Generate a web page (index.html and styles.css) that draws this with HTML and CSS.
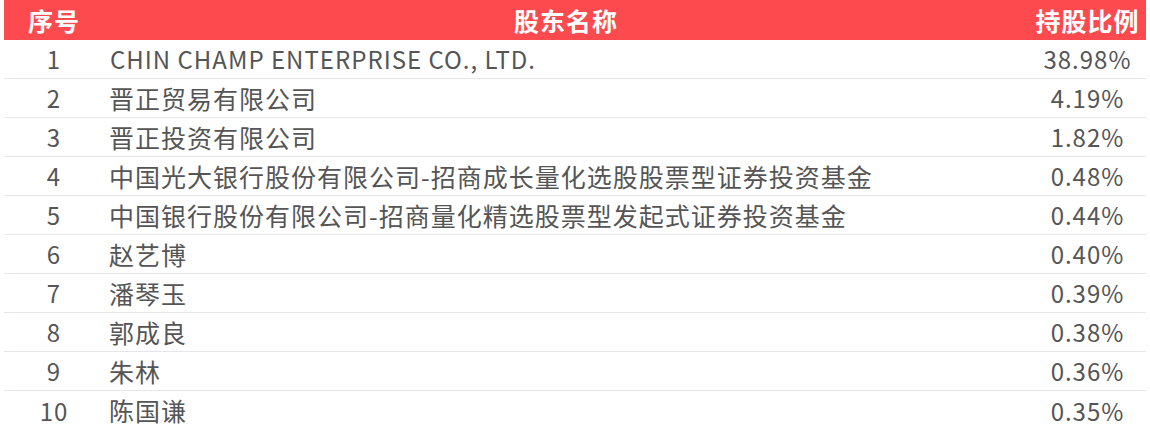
FILE: index.html
```html
<!DOCTYPE html>
<html lang="zh-CN">
<head>
<meta charset="utf-8">
<link rel="stylesheet" href="styles.css">
</head>
<body>
<div class="table">
  <div class="row head">
    <div class="c1">序号</div>
    <div class="c2">股东名称</div>
    <div class="c3">持股比例</div>
  </div>
  <div class="row"><div class="c1">1</div><div class="c2">CHIN CHAMP ENTERPRISE CO., LTD.</div><div class="c3">38.98%</div></div>
  <div class="row"><div class="c1">2</div><div class="c2 cn">晋正贸易有限公司</div><div class="c3">4.19%</div></div>
  <div class="row"><div class="c1">3</div><div class="c2 cn">晋正投资有限公司</div><div class="c3">1.82%</div></div>
  <div class="row"><div class="c1">4</div><div class="c2 cn">中国光大银行股份有限公司-招商成长量化选股股票型证券投资基金</div><div class="c3">0.48%</div></div>
  <div class="row"><div class="c1">5</div><div class="c2 cn">中国银行股份有限公司-招商量化精选股票型发起式证券投资基金</div><div class="c3">0.44%</div></div>
  <div class="row"><div class="c1">6</div><div class="c2 cn">赵艺博</div><div class="c3">0.40%</div></div>
  <div class="row"><div class="c1">7</div><div class="c2 cn">潘琴玉</div><div class="c3">0.39%</div></div>
  <div class="row"><div class="c1">8</div><div class="c2 cn">郭成良</div><div class="c3">0.38%</div></div>
  <div class="row"><div class="c1">9</div><div class="c2 cn">朱林</div><div class="c3">0.36%</div></div>
  <div class="row"><div class="c1">10</div><div class="c2 cn">陈国谦</div><div class="c3">0.35%</div></div>
</div>
</body>
</html>
```
FILE: styles.css
```css
html, body {
  margin: 0;
  padding: 0;
  background: #ffffff;
}
body {
  padding: 0 4px;
  font-family: "Noto Sans CJK SC", "Noto Sans", sans-serif;
  font-size: 24px;
  color: #555555;
}
.table {
  display: flex;
  flex-direction: column;
}
.row {
  display: grid;
  grid-template-columns: 100px 924px 118px;
  height: 39px;
  align-items: center;
  border-bottom: 1px solid #e6e6ec;
  box-sizing: border-box;
  line-height: 1;
  letter-spacing: 1px;
}
.row:last-child {
  border-bottom: none;
}
.row.head {
  height: 40px;
  background: #fd4a4f;
  color: #ffffff;
  font-weight: bold;
  font-size: 25px;
  border-bottom: none;
}
.c1 {
  text-align: center;
}
.c2 {
  padding-left: 6px;
  white-space: nowrap;
}
.c2.cn {
  font-size: 25px;
  padding-left: 5px;
}
.c3 {
  text-align: center;
  padding-left: 1px;
}
.head .c2 {
  text-align: center;
  padding-left: 0;
}
```
